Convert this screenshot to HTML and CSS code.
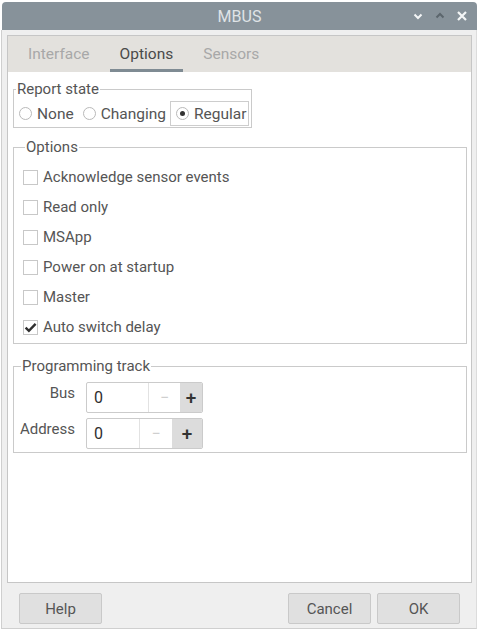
FILE: index.html
```html
<!DOCTYPE html>
<html>
<head>
<meta charset="utf-8">
<link rel="stylesheet" href="styles.css">
</head>
<body>
<div class="window">
  <div class="titlebar">
    <span class="title">MBUS</span>
    <div class="controls">
      <svg class="ctl" width="12" height="12" viewBox="0 0 12 12"><path d="M2.5 4.5 L6 8 L9.5 4.5" fill="none" stroke="#f4f6f7" stroke-width="2"/></svg>
      <svg class="ctl" width="12" height="12" viewBox="0 0 12 12"><path d="M2.5 7.5 L6 4 L9.5 7.5" fill="none" stroke="#5c666d" stroke-width="2"/></svg>
      <svg class="ctl" width="12" height="12" viewBox="0 0 12 12"><path d="M2 2 L10 10 M10 2 L2 10" fill="none" stroke="#f4f6f7" stroke-width="2.2"/></svg>
    </div>
  </div>
  <div class="body">
    <div class="tabframe">
      <div class="tabbar">
        <div class="tab">Interface</div>
        <div class="tab active">Options</div>
        <div class="tab">Sensors</div>
      </div>
      <div class="content">
        <fieldset class="group report">
          <legend>Report state</legend>
          <div class="radios">
            <div class="radio"><span class="circle"></span>None</div>
            <div class="radio"><span class="circle"></span>Changing</div>
            <div class="radio focus"><span class="circle on"></span>Regular</div>
          </div>
        </fieldset>
        <fieldset class="group options">
          <legend>Options</legend>
          <div class="check"><span class="box"></span>Acknowledge sensor events</div>
          <div class="check"><span class="box"></span>Read only</div>
          <div class="check"><span class="box"></span>MSApp</div>
          <div class="check"><span class="box"></span>Power on at startup</div>
          <div class="check"><span class="box"></span>Master</div>
          <div class="check"><span class="box"><svg width="13" height="13" viewBox="0 0 13 13"><path d="M1.6 6.6 L4.9 9.8 L11.6 2.8" fill="none" stroke="#2f2f2f" stroke-width="2.4"/></svg></span>Auto switch delay</div>
        </fieldset>
        <fieldset class="group prog">
          <legend>Programming track</legend>
          <div class="formgrid">
            <div class="lbl">Bus</div>
            <div class="spin">
              <div class="val v1">0</div>
              <div class="minus m1">−</div>
              <div class="plus p1">+</div>
            </div>
            <div class="lbl">Address</div>
            <div class="spin">
              <div class="val v2">0</div>
              <div class="minus m2">−</div>
              <div class="plus p2">+</div>
            </div>
          </div>
        </fieldset>
      </div>
    </div>
    <div class="buttons">
      <div class="btn">Help</div>
      <div class="spacer"></div>
      <div class="btn">Cancel</div>
      <div class="btn">OK</div>
    </div>
  </div>
</div>
</body>
</html>
```
FILE: styles.css
```css
html, body {
  margin: 0;
  padding: 0;
  background: #ffffff;
}
body {
  font-family: Roboto, "Liberation Sans", sans-serif;
  font-size: 15px;
  color: #555555;
}
.window {
  margin: 2px 2px 0 1px;
  width: 476px;
  height: 627px;
  display: flex;
  flex-direction: column;
}
.titlebar {
  height: 28px;
  margin-left: 1px;
  background: #87929a;
  border-radius: 4px 4px 0 0;
  display: flex;
  align-items: center;
  justify-content: center;
  position: relative;
}
.title {
  color: #dfe3e6;
  font-size: 16px;
}
.controls {
  position: absolute;
  right: 9px;
  top: 8px;
  display: flex;
  gap: 10px;
}
.ctl { display: block; }
.body {
  flex: 1;
  background: #efefef;
  border-left: 1px solid #cfcfcf;
  border-right: 1px solid #dcdcdc;
  border-bottom: 1px solid #cfcfcf;
  display: flex;
  flex-direction: column;
}
.tabframe {
  margin: 5px 4px 0 5px;
  border: 1px solid #c6c6c6;
  background: #ffffff;
  display: flex;
  flex-direction: column;
  height: 546px;
}
.tabbar {
  height: 36px;
  background: #e3e1dd;
  display: flex;
  padding-left: 10px;
  gap: 10px;
}
.tab {
  padding: 2px 10px 0;
  display: flex;
  align-items: center;
  color: #a8a8a8;
  border-bottom: 3px solid transparent;
  font-size: 15.5px;
}
.tab.active {
  color: #4a4a4a;
  border-bottom-color: #7f8b93;
}
.content {
  flex: 1;
  display: flex;
  flex-direction: column;
  align-items: flex-start;
  padding: 9px 4px 0 5px;
}
.group {
  margin: 0;
  border: 1px solid #cacaca;
  padding: 0;
  min-width: 0;
}
.group legend {
  padding: 0 1px;
  margin-left: 2px;
  line-height: 16px;
}
.report {
  padding: 4px 2px 1px 0;
}
.radios {
  display: flex;
}
.radio {
  height: 23px;
  border: 1px solid transparent;
  padding: 0 0 0 4px;
  margin-right: 3px;
  display: flex;
  align-items: center;
  gap: 5px;
  font-size: 15.5px;
}
.radio:last-child { margin-right: 0; }
.radio.focus {
  border-color: #cdcdcd;
  padding-left: 5px;
  padding-right: 1px;
}
.circle {
  width: 11px;
  height: 11px;
  border: 1px solid #b9b9b9;
  border-radius: 50%;
  background: #fff;
  display: flex;
  align-items: center;
  justify-content: center;
}
.circle.on::after {
  content: "";
  width: 5px;
  height: 5px;
  border-radius: 50%;
  background: #333;
}
.options {
  margin-top: 11px;
  align-self: stretch;
  padding: 7px 0 1px 9px;
}
.check {
  height: 30px;
  display: flex;
  align-items: center;
  gap: 5px;
}
.box {
  width: 13px;
  height: 13px;
  border: 1px solid #c8c8c8;
  background: #fff;
  display: flex;
  align-items: center;
  justify-content: center;
}
.box svg { display: block; }
.prog {
  margin-top: 14px;
  align-self: stretch;
  padding: 8px 0 3px 5px;
}
.formgrid {
  display: grid;
  grid-template-columns: 56px auto;
  column-gap: 11px;
  row-gap: 5px;
  justify-content: start;
}
.lbl {
  text-align: right;
  padding-top: 3px;
  line-height: 16px;
}
.spin {
  width: 115px;
  height: 29px;
  border: 1px solid #cbcbcb;
  border-radius: 2px;
  display: flex;
  overflow: hidden;
  background: #fff;
}
.val {
  display: flex;
  align-items: center;
  padding-left: 7px;
  color: #2e2e2e;
  font-size: 16px;
}
.v1 { width: 54px; }
.v2 { width: 45px; }
.minus {
  border-left: 1px solid #e2e2e2;
  display: flex;
  align-items: center;
  justify-content: center;
  color: #cfcfcf;
  font-size: 16px;
}
.m1 { width: 31px; }
.m2 { width: 32px; }
.plus {
  flex: 1;
  background: #dcdcdc;
  display: flex;
  align-items: center;
  justify-content: center;
  color: #333;
  font-size: 19px;
  font-weight: 500;
}
.buttons {
  display: flex;
  padding: 10px 16px 0 17px;
  gap: 6px;
}
.spacer { flex: 1; }
.btn {
  width: 81px;
  height: 29px;
  border: 1px solid #c9c9c9;
  border-radius: 2px;
  background: #e0e0e0;
  display: flex;
  align-items: center;
  justify-content: center;
}
```
